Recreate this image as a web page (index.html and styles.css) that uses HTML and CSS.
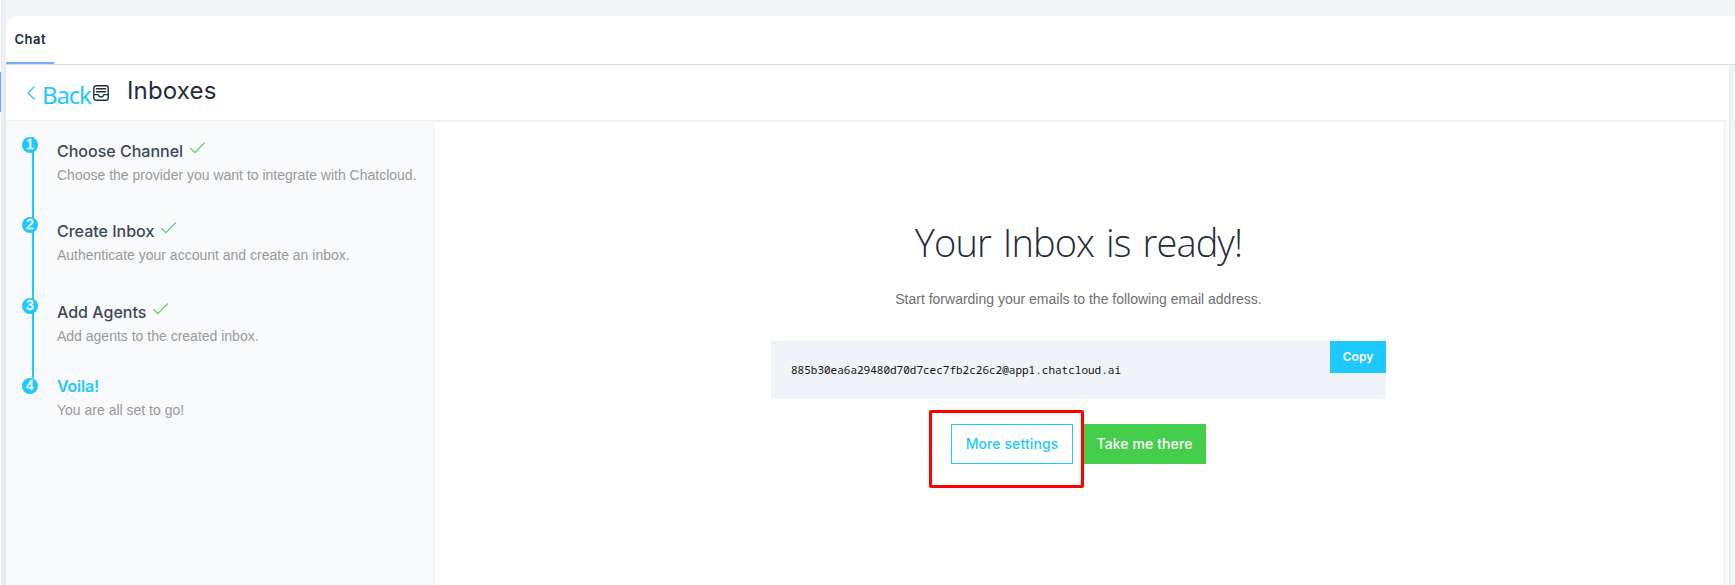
FILE: index.html
```html
<!DOCTYPE html>
<html lang="en">
<head>
<meta charset="utf-8">
<title>Inboxes</title>
<link rel="stylesheet" href="styles.css">
</head>
<body>
<div class="app">
  <aside class="rail"><span class="rail-active"></span></aside>
  <div class="shell">
    <nav class="tabs"><a class="tab">Chat</a></nav>
    <div class="page">
      <header class="page-header">
        <a class="back">
          <svg class="chevron" viewBox="0 0 8 14"><path d="M7.300.8 1 7l6.300 6.200"/></svg>
          <span class="back-label">Back</span>
        </a>
        <svg class="inbox-icon" viewBox="0 0 16 16"><rect x=".8" y=".8" width="14.400" height="14.400" rx="2.300"/><path d="M3.400 3.800h9.200M3.400 6.800h9.200M1 9.600h3.800c.5 0 .6.400.8.900.3.900 1.100 1.500 2.400 1.500s2.100-.6 2.400-1.500c.2-.5.3-.9.800-.9H15"/></svg>
        <h1 class="page-title">Inboxes</h1>
      </header>
      <div class="columns">
        <ol class="steps">
          <li class="step">
            <span class="dot">1</span>
            <h3 class="step-title"><span>Choose Channel</span><svg class="check" viewBox="0 0 15 12"><path d="M.5 6.300 4.800 10.600 14.500.8"/></svg></h3>
            <p class="step-text">Choose the provider you want to integrate with Chatcloud.</p>
          </li>
          <li class="step step-tall">
            <span class="dot">2</span>
            <h3 class="step-title"><span>Create Inbox</span><svg class="check" viewBox="0 0 15 12"><path d="M.5 6.300 4.800 10.600 14.500.8"/></svg></h3>
            <p class="step-text">Authenticate your account and create an inbox.</p>
          </li>
          <li class="step">
            <span class="dot">3</span>
            <h3 class="step-title"><span>Add Agents</span><svg class="check" viewBox="0 0 15 12"><path d="M.5 6.300 4.800 10.600 14.500.8"/></svg></h3>
            <p class="step-text">Add agents to the created inbox.</p>
          </li>
          <li class="step step-active">
            <span class="dot">4</span>
            <h3 class="step-title"><span>Voila!</span></h3>
            <p class="step-text">You are all set to go!</p>
          </li>
        </ol>
        <main class="content">
          <h2 class="ready">Your Inbox is ready!</h2>
          <p class="message">Start forwarding your emails to the following email address.</p>
          <div class="code-box">
            <code class="address">885b30ea6a29480d70d7cec7fb2c26c2@app1.chatcloud.ai</code>
            <button class="copy">Copy</button>
          </div>
          <div class="actions">
            <div class="settings-wrap">
              <button class="btn btn-outline">More settings</button>
              <span class="highlight"></span>
            </div>
            <button class="btn btn-success">Take me there</button>
          </div>
        </main>
        <div class="edge"></div>
      </div>
    </div>
  </div>
</div>
</body>
</html>
```
FILE: styles.css
```css
* { box-sizing: border-box; }
body {
  margin: 0;
  overflow: hidden;
  background: #f4f5f7;
  font-family: "Liberation Sans", Arial, sans-serif;
}
h1, h2, h3, p, ol { margin: 0; padding: 0; font-weight: 400; }
ol { list-style: none; }
svg { fill: none; stroke-linecap: round; stroke-linejoin: round; flex: none; display: block; }
button { font-family: inherit; border: 0; padding: 0; white-space: nowrap; }

.app { display: flex; height: 585px; }
.rail {
  width: 6px;
  flex: none;
  padding-top: 72px;
  background: linear-gradient(90deg, #fff 0 1px, #e4e8f0 1px 2px, #edf0f5 2px);
}
.rail-active { display: block; width: 1px; height: 40px; background: #6eabf8; }
.shell { flex: 1; padding-top: 16px; min-width: 0; background: #f4f5f7; }
.tabs {
  display: flex;
  height: 49px;
  background: #fff;
  border-bottom: 1px solid #d8dce6;
  border-top-left-radius: 12px;
}
.tab {
  width: 48px;
  height: 48px;
  padding-left: 8.5px;
  border-bottom: 2px solid #70adfa;
  font: 600 13px/46px Inter, sans-serif;
  letter-spacing: .5px;
  color: #1f2937;
}
.page {
  height: 520px;
  margin-right: 6px;
  background: #fff;
  box-shadow: 0 2px 4px #d3dbe7;
}
.page-header {
  display: flex;
  height: 56px;
  border-bottom: 1px solid #eef2f6;
  padding-left: 21px;
}
.back { display: flex; flex: none; color: #1fc8ff; }
.chevron { width: 8px; height: 14px; margin-top: 21px; stroke: #1fc8ff; stroke-width: 1.2; }
.back-label { width: 58px; padding-left: 7px; font: 400 24px/59px "Noto Sans", sans-serif; letter-spacing: -1.2px; white-space: nowrap; }
.inbox-icon { width: 16px; height: 16px; margin-top: 20px; stroke: #1f2d3d; stroke-width: 1.4; }
.page-title { margin-left: 18px; font: 400 24px/52px Inter, sans-serif; letter-spacing: .15px; color: #1f2d3d; }

.columns { display: flex; height: 464px; }
.steps { width: 428px; flex: none; padding: 16px 0 0 16px; background: #f9fafc; border-right: 1px solid #edf0f4; }
.step {
  display: grid;
  grid-template-columns: 35px 1fr;
  grid-template-rows: 30px 25px;
  height: 80px;
  background: linear-gradient(#1fc8ff, #1fc8ff) 10px 0 / 2px 100% no-repeat;
}
.step-tall { height: 81px; }
.step-active { background: none; grid-template-rows: 24px 25px; }
.dot { width: 16px; height: 16px; border-radius: 50%; background: #1fc8ff; color: #fff; font-size: 14px; line-height: 15px; text-align: center; -webkit-text-stroke: .4px #fff; }
.step-title { display: flex; font: 500 16px/29px Inter, sans-serif; color: #3c4858; white-space: nowrap; }
.step-active .step-title { color: #1fc8ff; font-weight: 600; line-height: 16px; letter-spacing: -.2px; }
.check { width: 15px; height: 12px; margin: 5px 0 0 7px; stroke: #44ce4b; stroke-width: 1.1; }
.step-text { grid-column: 2; font-size: 14px; line-height: 16px; color: #999; white-space: nowrap; }

.content { flex: 1; display: flex; flex-direction: column; align-items: center; padding: 90px 1px 0 0; border-top: 2px solid #eef2f6; margin-top: -1px; }
.ready { font: 300 38px/60px "Open Sans", sans-serif; letter-spacing: -.9px; word-spacing: 3px; color: #1f2d3d; white-space: nowrap; }
.message { margin-top: 17px; font-size: 14px; line-height: 20px; color: #6e6f73; }
.code-box { display: flex; justify-content: space-between; align-items: flex-start; width: 615px; height: 58px; margin-top: 32px; padding-left: 20px; background: #f0f4f8; }
.address { font: 400 11px/58px "Noto Sans Mono", "DejaVu Sans Mono", monospace; color: #111; }
.copy { width: 56px; height: 32px; background: #1fc8ff; color: #fff; font: 600 12px/32px Inter, sans-serif; }
.actions { display: flex; gap: 10px; margin-top: 25px; }
.settings-wrap { position: relative; }
.btn { height: 40px; font: 500 14px/38px Inter, sans-serif; letter-spacing: .1px; }
.btn-outline { width: 122px; border: 1px solid #1fc8ff; background: #fff; color: #1fc8ff; }
.btn-success { width: 123px; background: #44ce4b; color: #fff; }
.highlight { position: absolute; left: -22px; top: -14px; width: 155px; height: 78px; border: 3px solid #f00; border-radius: 2px; }
.edge { width: 5px; background: #fafbfd; border-left: 1px solid #edf0f4; }
```
